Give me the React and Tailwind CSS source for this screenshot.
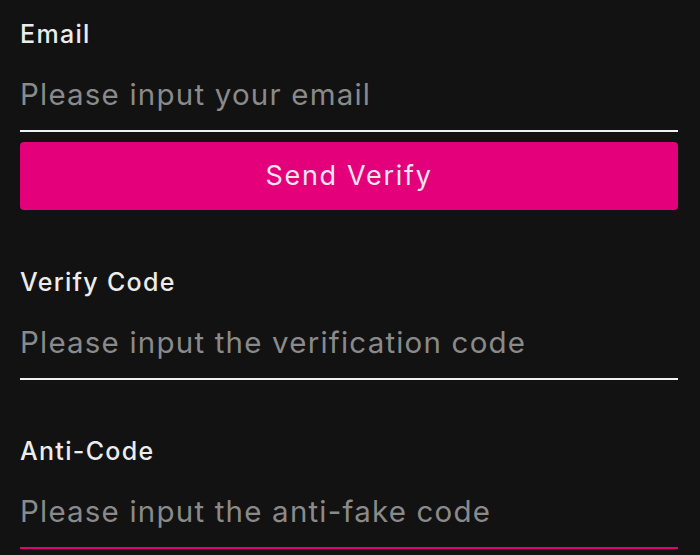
import { useState } from 'react';

function Field({ label, placeholder, lineClass, className = '' }) {
  const [value, setValue] = useState('');
  return (
    <div className={className}>
      <label className="block h-[36px] text-[25px] leading-[36px] font-medium tracking-[1.3px] text-[#ececec]">{label}</label>
      <input
        value={value}
        onChange={(e) => setValue(e.target.value)}
        placeholder={placeholder}
        className={`mt-[6px] block h-[74px] w-full border-b-2 bg-transparent text-[29.5px] tracking-[1.2px] text-[#ececec] outline-none placeholder:text-[#8a8a8a] ${lineClass}`}
      />
    </div>
  );
}

export default function App() {
  return (
    <div className="min-h-[555px] w-full bg-[#121212] pl-[20px] pr-[22px] pt-[16px] font-['Inter',sans-serif]">
      <Field label="Email" placeholder="Please input your email" lineClass="border-[#f2f2f2]" />
      <button className="mt-[10px] h-[68px] w-full rounded-[4px] bg-[#e4007b] text-[27px] tracking-[1.7px] text-[#f3e6ee]">
        Send Verify
      </button>
      <Field className="mt-[54px]" label="Verify Code" placeholder="Please input the verification code" lineClass="border-[#f2f2f2]" />
      <Field className="mt-[53px]" label="Anti-Code" placeholder="Please input the anti-fake code" lineClass="border-[#e4007b]" />
    </div>
  );
}
